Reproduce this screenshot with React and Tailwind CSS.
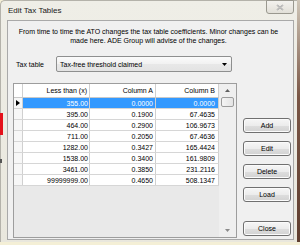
import React from "react";

const rows = [
  ["355.00", "0.0000", "0.0000"],
  ["395.00", "0.1900", "67.4635"],
  ["464.00", "0.2900", "106.9673"],
  ["711.00", "0.2050", "67.4636"],
  ["1282.00", "0.3427", "165.4424"],
  ["1538.00", "0.3400", "161.9809"],
  ["3461.00", "0.3850", "231.2116"],
  ["99999999.00", "0.4650", "508.1347"],
];

const btn =
  "h-[15px] w-[48px] flex items-center justify-center rounded-[3px] border border-[#707070] bg-[linear-gradient(to_bottom,#f6f6f6_0%,#ececec_50%,#dedede_51%,#d2d2d2_100%)] text-[7px] leading-none text-black shadow-[inset_0_0_0_1px_#fbfbfb]";

function Button({ children, className = "" }) {
  return <div className={`${btn} ${className}`}>{children}</div>;
}

export default function App() {
  return (
    <div className="w-[300px] h-[245px] overflow-hidden bg-[#f4efd6] font-['Liberation_Sans',Arial,sans-serif] text-black">
      <div className="flex h-[242px]">
        {/* window */}
        <div className="relative w-[297px] h-[242px] flex flex-col rounded-tl-[5px] border-l border-t border-[#b4b2aa] bg-[linear-gradient(to_bottom,#efeee7,#e9e7dd)]">
          <div className="absolute left-[-1px] top-[112px] w-[3px] h-[22px] bg-[#e4101a]" />
          <div className="absolute left-[-1px] top-[158px] w-[2px] h-[4px] bg-[#555]" />
          {/* title bar */}
          <div className="h-[19px] flex items-start justify-between pl-[7px] pr-[3px]">
            <div className="pt-[5px] text-[8px] leading-[10px] text-[#1a1a1a]">Edit Tax Tables</div>
            <div className="mt-[-1px] w-[28px] h-[14px] rounded-b-[3px] border border-[#9a988f] bg-[linear-gradient(to_bottom,#f3f2ee,#e2e0d8)] flex items-center justify-center">
              <svg width="8" height="7" viewBox="0 0 8 7">
                <path d="M1 1 L7 6 M7 1 L1 6" stroke="#9c9c9c" strokeWidth="1.6" />
                <path d="M1 1 L7 6 M7 1 L1 6" stroke="#e8e8e8" strokeWidth="0.5" />
              </svg>
            </div>
          </div>
          {/* client */}
          <div className="ml-[6px] mr-[3px] h-[220px] border border-[#a9a9a9] bg-[#f0f0f0] flex flex-col">
            <div className="mt-[6px] text-center text-[7px] leading-[9px] pl-[-2px] pr-[4px]">
              From time to time the ATO changes the tax table coefficients. Minor changes can be
              <br />
              made here. ADE Group will advise of the changes.
            </div>
            <div className="mt-[11px] flex items-center h-[16px]">
              <div className="w-[48px] pl-[8px] text-[7px] leading-none">Tax table</div>
              <div className="w-[176px] h-[16px] rounded-[2px] border border-[#8e8f8f] bg-[linear-gradient(to_bottom,#fbfbfb,#f1f1f1_50%,#e8e8e8_51%,#e3e3e3)] flex items-center justify-between pl-[3px] pr-[4px]">
                <span className="text-[7px] leading-none">Tax-free threshold claimed</span>
                <svg width="5" height="3" viewBox="0 0 5 3">
                  <path d="M0 0 H5 L2.5 3 Z" fill="#000" />
                </svg>
              </div>
            </div>
            <div className="mt-[11px] flex items-start">
              {/* grid */}
              <div className="ml-[5px] w-[224px] h-[155px] border border-[#9d9d9d] bg-[#e9e9e9] flex">
                <div className="w-[205px] flex flex-col">
                  <div className="flex h-[14px] bg-white border-b border-[#c9c9c9] text-[7px] leading-none">
                    <div className="w-[9px] border-r border-[#d0d0d0]" />
                    <div className="w-[67px] border-r border-[#d0d0d0] flex items-center justify-end pr-[2px]">Less than (x)</div>
                    <div className="w-[66px] border-r border-[#d0d0d0] flex items-center justify-end pr-[2px]">Column A</div>
                    <div className="w-[63px] border-r border-[#d0d0d0] flex items-center justify-end pr-[3px]">Column B</div>
                  </div>
                  {rows.map((r, i) => {
                    const sel = i === 0;
                    const cell = sel ? "bg-[#3399ff] text-white" : "bg-white text-black";
                    return (
                      <div key={i} className="flex h-[11px] text-[7px] leading-none border-b border-[#d6d6d6]">
                        <div className="w-[9px] border-r border-[#d0d0d0] bg-[#f7f7f7] flex items-center justify-center">
                          {sel && (
                            <svg width="4" height="6" viewBox="0 0 4 6">
                              <path d="M0 0 L4 3 L0 6 Z" fill="#000" />
                            </svg>
                          )}
                        </div>
                        <div className={`w-[67px] border-r border-[#d0d0d0] flex items-center justify-end pr-[1px] ${cell}`}>{r[0]}</div>
                        <div className={`w-[66px] border-r border-[#d0d0d0] flex items-center justify-end pr-[2px] ${cell}`}>{r[1]}</div>
                        <div className={`w-[63px] border-r border-[#d0d0d0] flex items-center justify-end pr-[3px] ${cell}`}>{r[2]}</div>
                      </div>
                    );
                  })}
                </div>
                {/* scrollbar */}
                <div className="w-[17px] flex flex-col bg-[#efefef]">
                  <div className="h-[13px] flex items-center justify-center">
                    <svg width="5" height="3" viewBox="0 0 5 3">
                      <path d="M2.5 0 L5 3 H0 Z" fill="#606060" />
                    </svg>
                  </div>
                  <div className="mx-[2px] h-[10px] rounded-[2px] border border-[#9c9c9c] bg-[linear-gradient(to_right,#f5f5f5,#e4e4e4)]" />
                  <div className="flex-1" />
                  <div className="h-[13px] flex items-center justify-center">
                    <svg width="5" height="3" viewBox="0 0 5 3">
                      <path d="M0 0 H5 L2.5 3 Z" fill="#8a8a8a" />
                    </svg>
                  </div>
                </div>
              </div>
              {/* buttons */}
              <div className="ml-[6px] flex flex-col">
                <Button className="mt-[35px]">Add</Button>
                <Button className="mt-[8px]">Edit</Button>
                <Button className="mt-[8px]">Delete</Button>
                <Button className="mt-[8px]">Load</Button>
                <Button className="mt-[19px]">Close</Button>
              </div>
            </div>
          </div>
        </div>
        <div className="w-[3px] h-[242px] bg-[linear-gradient(to_bottom,#cfc6b8,#7a5645_40%,#5f3e30)]" />
      </div>
    </div>
  );
}
